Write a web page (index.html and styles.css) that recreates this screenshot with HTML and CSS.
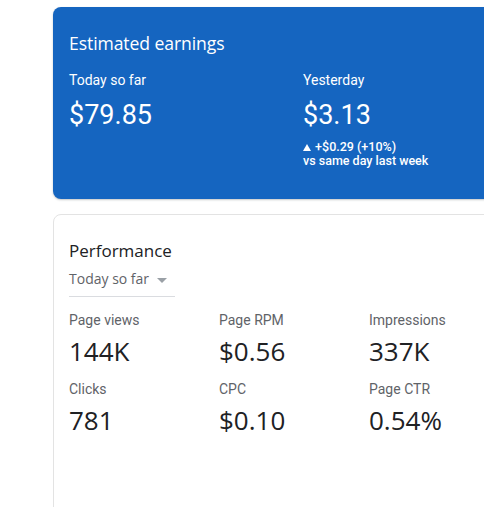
FILE: index.html
```html
<!DOCTYPE html>
<html>
<head>
<meta charset="utf-8">
<link rel="stylesheet" href="styles.css">
</head>
<body>
<main class="page">
  <section class="card earnings">
    <h2 class="earn-title">Estimated earnings</h2>
    <div class="earn-row">
      <div class="earn-col">
        <div class="earn-label">Today so far</div>
        <div class="earn-value">$79.85</div>
      </div>
      <div class="earn-col">
        <div class="earn-label">Yesterday</div>
        <div class="earn-value">$3.13</div>
        <div class="earn-delta"><svg class="tri" width="8" height="7" viewBox="0 0 8 7"><path d="M4 0L8 7H0z" fill="#fff"/></svg> +$0.29 (+10%)</div>
        <div class="earn-delta">vs same day last week</div>
      </div>
    </div>
  </section>
  <section class="card perf">
    <h2 class="perf-title">Performance</h2>
    <div class="select">
      <span>Today so far</span>
      <svg class="caret" width="10" height="5" viewBox="0 0 10 5"><path d="M0 0h10L5 5z" fill="#9aa0a6"/></svg>
    </div>
    <div class="metrics">
      <div class="metric"><div class="m-label">Page views</div><div class="m-value">144K</div></div>
      <div class="metric"><div class="m-label">Page RPM</div><div class="m-value">$0.56</div></div>
      <div class="metric"><div class="m-label">Impressions</div><div class="m-value">337K</div></div>
      <div class="metric"><div class="m-label">Clicks</div><div class="m-value">781</div></div>
      <div class="metric"><div class="m-label">CPC</div><div class="m-value">$0.10</div></div>
      <div class="metric"><div class="m-label">Page CTR</div><div class="m-value">0.54%</div></div>
    </div>
  </section>
</main>
</body>
</html>
```
FILE: styles.css
```css
html, body {
  margin: 0;
  padding: 0;
  background: #fff;
  overflow: hidden;
  width: 484px;
  height: 507px;
}
.page {
  padding: 7px 0 0 53px;
  display: flex;
  flex-direction: column;
  gap: 15px;
  width: 500px;
}
.card {
  border-radius: 8px;
  box-sizing: border-box;
}
.earnings {
  background: #1565c0;
  color: #fff;
  height: 192px;
  padding: 24px 16px 0 16px;
  box-shadow: 0 1px 2px rgba(60,64,67,0.3);
}
.earn-title {
  margin: 0;
  font-family: "Open Sans", sans-serif;
  font-weight: 400;
  font-size: 17.6px;
  line-height: 24px;
  letter-spacing: -0.1px;
}
.earn-row {
  display: grid;
  grid-template-columns: 234px 234px;
  margin-top: 15px;
}
.earn-label {
  font-family: Roboto, sans-serif;
  font-size: 14px;
  line-height: 20px;
}
.earn-value {
  font-family: Roboto, sans-serif;
  font-size: 27px;
  line-height: 32px;
  margin-top: 9px;
}
.earn-delta {
  font-family: Roboto, sans-serif;
  font-size: 12.5px;
  font-weight: 500;
  line-height: 14px;
}
.earn-value + .earn-delta {
  margin-top: 9px;
}
.tri {
  vertical-align: 0;
  margin-right: 1px;
}
.perf {
  background: #fff;
  border: 1px solid #e3e3e3;
  height: 320px;
  padding: 24px 15px 0 15px;
}
.perf-title {
  margin: 0;
  font-family: "Open Sans", sans-serif;
  font-weight: 400;
  font-size: 17px;
  line-height: 24px;
  color: #202124;
}
.select {
  display: inline-flex;
  align-items: center;
  gap: 8px;
  width: 106px;
  box-sizing: border-box;
  border-bottom: 1px solid #dadce0;
  padding: 6px 0 7px 0;
  font-family: "Open Sans", sans-serif;
  font-size: 14px;
  line-height: 20px;
  color: #5f6368;
}
.caret {
  margin-top: 2px;
}
.metrics {
  display: grid;
  grid-template-columns: 150px 150px 150px;
  row-gap: 10px;
  margin-top: 13px;
}
.m-label {
  font-family: Roboto, sans-serif;
  font-size: 14px;
  line-height: 20px;
  color: #5f6368;
}
.m-value {
  font-family: "Open Sans", sans-serif;
  font-size: 26px;
  line-height: 36px;
  color: #202124;
  margin-top: 3px;
}
```
